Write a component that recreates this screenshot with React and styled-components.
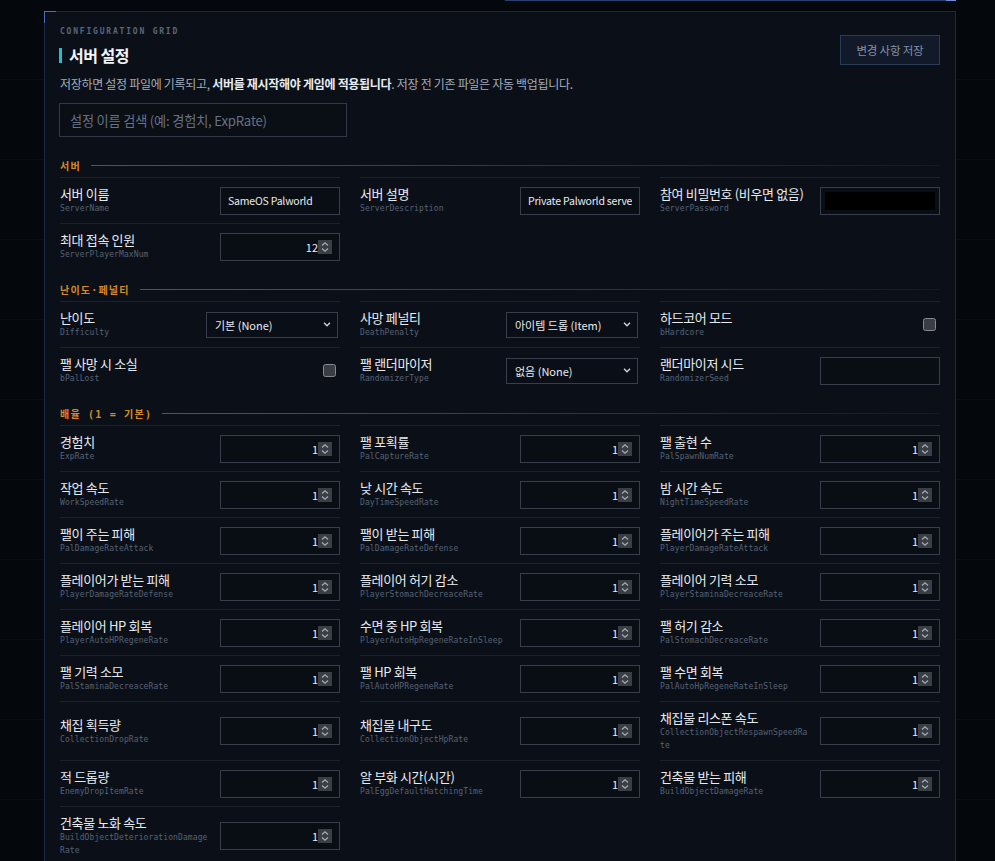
import React from 'react';
import styled, { createGlobalStyle } from 'styled-components';

const GlobalStyle = createGlobalStyle`
    html, body {
        margin: 0;
        padding: 0;
    }
    body {
        background-color: #04070c;
        background-image: linear-gradient(rgba(70, 100, 150, 0.07) 1px, transparent 1px);
        background-size: 80px 80px;
        background-position: 0 -1px;
        font-family: "Noto Sans CJK KR", "Noto Sans", sans-serif;
        color: #e6e9ef;
    }
    * {
        box-sizing: border-box;
    }
`;

const Page = styled.div`
    padding: 0 0 0 44px;
    min-height: 100vh;
`;

const Column = styled.div`
    width: 912px;
`;

const PrevEdge = styled.div`
    margin-left: auto;
    width: 451px;
    height: 1px;
    background: #26406e;
    position: relative;
    &::after {
        content: "";
        position: absolute;
        right: 0;
        top: 0;
        width: 10px;
        height: 1px;
        background: #6b8fd6;
    }
`;

const Panel = styled.section`
    position: relative;
    margin-top: 10px;
    border: 1px solid #1c2944;
    background: #0b1018;
    padding: 15px 15px 40px;
    &::before {
        content: "";
        position: absolute;
        left: -1px;
        top: -1px;
        width: 11px;
        height: 11px;
        border-top: 1px solid #4e6fb8;
        border-left: 1px solid #4e6fb8;
    }
`;

const HeaderRow = styled.div`
    display: flex;
    justify-content: space-between;
    align-items: flex-end;
`;

const Eyebrow = styled.div`
    font-family: "DejaVu Sans Mono", monospace;
    font-size: 8px;
    line-height: 10px;
    font-weight: bold;
    letter-spacing: 1.8px;
    color: #59667c;
    margin-bottom: 8px;
`;

const Title = styled.h1`
    margin: 0;
    display: flex;
    align-items: center;
    font-size: 16px;
    line-height: 20px;
    font-weight: bold;
    letter-spacing: -0.5px;
    color: #f2f4f8;
    &::before {
        content: "";
        width: 3px;
        height: 15px;
        background: #22bdd4;
        margin: 0 7px 0 -1px;
    }
`;

const SaveButton = styled.button`
    width: 100px;
    height: 30px;
    margin-bottom: 0;
    background: #121a29;
    border: 1px solid #2b3c5b;
    color: #8190a8;
    font-family: "Noto Sans CJK KR", sans-serif;
    font-size: 11.5px;
    letter-spacing: -0.2px;
    padding: 0;
`;

const Description = styled.p`
    margin: 11px 0 0;
    font-size: 12px;
    line-height: 16px;
    letter-spacing: -0.3px;
    color: #a3abb8;
    strong {
        color: #e8ecf2;
        font-weight: 600;
    }
`;

const Search = styled.input`
    display: block;
    margin: 11px 0 22px -1px;
    width: 288px;
    height: 34px;
    padding: 0 10px;
    background: #0a0e15;
    border: 1px solid #313948;
    color: #e6e9ef;
    font-family: "Noto Sans CJK KR", sans-serif;
    font-size: 13.2px;
    letter-spacing: -0.2px;
    outline: none;
    &::placeholder {
        color: #687183;
    }
`;

const SectionHead = styled.div`
    display: flex;
    align-items: center;
    gap: 10px;
    margin: 14px 0 6px;
    height: 12px;
    font-family: "DejaVu Sans Mono", "Noto Sans CJK KR", monospace;
    font-size: 10px;
    font-weight: bold;
    letter-spacing: 1.2px;
    color: #d98a22;
    white-space: nowrap;
    &::after {
        content: "";
        flex: 1;
        height: 1px;
        background: linear-gradient(90deg, rgba(200, 130, 40, 0.55), rgba(200, 130, 40, 0.08));
    }
`;

const Grid = styled.div`
    display: grid;
    grid-template-columns: repeat(3, 280px);
    column-gap: 20px;
`;

const Field = styled.div`
    display: flex;
    align-items: center;
    gap: 10px;
    border-top: 1px solid #1b212d;
    padding: 8px 0;
`;

const LabelBlock = styled.div`
    flex: 1;
    min-width: 0;
`;

const Label = styled.div`
    font-size: 13px;
    line-height: 16px;
    letter-spacing: -0.35px;
    color: #e8ebf0;
`;

const Key = styled.div`
    font-family: "DejaVu Sans Mono", monospace;
    font-size: 8px;
    line-height: 13px;
    letter-spacing: 0.1px;
    color: #566275;
    word-break: break-all;
`;

const TextBox = styled.input`
    width: 120px;
    height: 28px;
    flex-shrink: 0;
    padding: 0 7px;
    background: ${p => (p.$secret ? '#000' : '#090d14')};
    box-shadow: ${p => (p.$secret ? 'inset 0 0 0 4px #090d14' : 'none')};
    border: 1px solid #363e4c;
    color: #e8ebf0;
    font-family: "Noto Sans CJK KR", sans-serif;
    font-size: 10.5px;
    letter-spacing: -0.2px;
    outline: none;
`;

const NumberBox = styled.div`
    width: 120px;
    height: 28px;
    flex-shrink: 0;
    display: flex;
    align-items: center;
    justify-content: flex-end;
    padding-right: 7px;
    background: #090d14;
    border: 1px solid #363e4c;
    font-size: 11px;
    color: #eceff4;
`;

const Spinner = styled.span`
    width: 14px;
    height: 14px;
    background: #3a3e46;
    display: flex;
    align-items: center;
    justify-content: center;
`;

const SelectBox = styled.div`
    width: 132px;
    height: 26px;
    flex-shrink: 0;
    margin-right: 2px;
    display: flex;
    align-items: center;
    justify-content: space-between;
    padding: 0 6px 0 8px;
    background: #0a0e16;
    border: 1px solid #363e4c;
    font-size: 11px;
    color: #e8ebf0;
`;

const Check = styled.span`
    width: 13px;
    height: 13px;
    flex-shrink: 0;
    margin-right: 4px;
    border: 1px solid #858a93;
    border-radius: 2.5px;
    background: #3a3d44;
`;

const SpinIcon = () => (
    <svg width="10" height="12" viewBox="0 0 10 12">
        <path d="M2 4.5 L5 1.8 L8 4.5 M2 7.5 L5 10.2 L8 7.5" fill="none" stroke="#a6acb4" strokeWidth="1.2" />
    </svg>
);

const Chevron = () => (
    <svg width="8" height="5" viewBox="0 0 8 5">
        <path d="M1 0.8 L4 3.8 L7 0.8" fill="none" stroke="#d3d7dd" strokeWidth="1.3" />
    </svg>
);

const serverFields = [
    { label: '서버 이름', key: 'ServerName', type: 'text', value: 'SameOS Palworld' },
    { label: '서버 설명', key: 'ServerDescription', type: 'text', value: 'Private Palworld server' },
    { label: '참여 비밀번호 (비우면 없음)', key: 'ServerPassword', type: 'password', value: '' },
    { label: '최대 접속 인원', key: 'ServerPlayerMaxNum', type: 'number', value: '12' },
];

const penaltyFields = [
    { label: '난이도', key: 'Difficulty', type: 'select', value: '기본 (None)' },
    { label: '사망 페널티', key: 'DeathPenalty', type: 'select', value: '아이템 드롭 (Item)' },
    { label: '하드코어 모드', key: 'bHardcore', type: 'check' },
    { label: '팰 사망 시 소실', key: 'bPalLost', type: 'check' },
    { label: '팰 랜더마이저', key: 'RandomizerType', type: 'select', value: '없음 (None)' },
    { label: '랜더마이저 시드', key: 'RandomizerSeed', type: 'text', value: '' },
];

const rates = [
    ['경험치', 'ExpRate'],
    ['팰 포획률', 'PalCaptureRate'],
    ['팰 출현 수', 'PalSpawnNumRate'],
    ['작업 속도', 'WorkSpeedRate'],
    ['낮 시간 속도', 'DayTimeSpeedRate'],
    ['밤 시간 속도', 'NightTimeSpeedRate'],
    ['팰이 주는 피해', 'PalDamageRateAttack'],
    ['팰이 받는 피해', 'PalDamageRateDefense'],
    ['플레이어가 주는 피해', 'PlayerDamageRateAttack'],
    ['플레이어가 받는 피해', 'PlayerDamageRateDefense'],
    ['플레이어 허기 감소', 'PlayerStomachDecreaceRate'],
    ['플레이어 기력 소모', 'PlayerStaminaDecreaceRate'],
    ['플레이어 HP 회복', 'PlayerAutoHPRegeneRate'],
    ['수면 중 HP 회복', 'PlayerAutoHpRegeneRateInSleep'],
    ['팰 허기 감소', 'PalStomachDecreaceRate'],
    ['팰 기력 소모', 'PalStaminaDecreaceRate'],
    ['팰 HP 회복', 'PalAutoHPRegeneRate'],
    ['팰 수면 회복', 'PalAutoHpRegeneRateInSleep'],
    ['채집 획득량', 'CollectionDropRate'],
    ['채집물 내구도', 'CollectionObjectHpRate'],
    ['채집물 리스폰 속도', 'CollectionObjectRespawnSpeedRate'],
    ['적 드롭량', 'EnemyDropItemRate'],
    ['알 부화 시간(시간)', 'PalEggDefaultHatchingTime'],
    ['건축물 받는 피해', 'BuildObjectDamageRate'],
    ['건축물 노화 속도', 'BuildObjectDeteriorationDamageRate'],
].map(([label, key]) => ({ label, key, type: 'number', value: '1' }));

function Control({ field }) {
    switch (field.type) {
        case 'number':
            return (
                <NumberBox>
                    {field.value}
                    <Spinner><SpinIcon /></Spinner>
                </NumberBox>
            );
        case 'select':
            return (
                <SelectBox>
                    {field.value}
                    <Chevron />
                </SelectBox>
            );
        case 'check':
            return <Check />;
        case 'password':
            return <TextBox type="password" $secret readOnly value={field.value} />;
        default:
            return <TextBox type="text" readOnly value={field.value} />;
    }
}

function FieldGrid({ fields }) {
    return (
        <Grid>
            {fields.map(f => (
                <Field key={f.key}>
                    <LabelBlock>
                        <Label>{f.label}</Label>
                        <Key>{f.key}</Key>
                    </LabelBlock>
                    <Control field={f} />
                </Field>
            ))}
        </Grid>
    );
}

export default function App() {
    return (
        <Page>
            <GlobalStyle />
            <Column>
                <PrevEdge />
                <Panel>
                    <HeaderRow>
                        <div>
                            <Eyebrow>CONFIGURATION GRID</Eyebrow>
                            <Title>서버 설정</Title>
                        </div>
                        <SaveButton>변경 사항 저장</SaveButton>
                    </HeaderRow>
                    <Description>
                        저장하면 설정 파일에 기록되고, <strong>서버를 재시작해야 게임에 적용됩니다</strong>. 저장 전 기존 파일은 자동 백업됩니다.
                    </Description>
                    <Search placeholder="설정 이름 검색 (예: 경험치, ExpRate)" />

                    <SectionHead>서버</SectionHead>
                    <FieldGrid fields={serverFields} />

                    <SectionHead>난이도·페널티</SectionHead>
                    <FieldGrid fields={penaltyFields} />

                    <SectionHead>배율 (1 = 기본)</SectionHead>
                    <FieldGrid fields={rates} />
                </Panel>
            </Column>
        </Page>
    );
}
